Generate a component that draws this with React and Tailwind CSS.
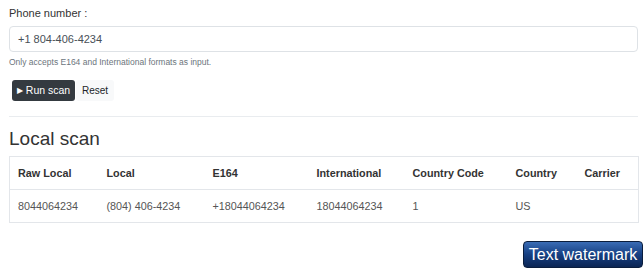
export default function App() {
  const headers = [
    ["Raw Local", "w-[89px]"],
    ["Local", "w-[106px]"],
    ["E164", "w-[104px]"],
    ["International", "w-[96px]"],
    ["Country Code", "w-[103px]"],
    ["Country", "w-[69px]"],
    ["Carrier", ""],
  ];
  const row = ["8044064234", "(804) 406-4234", "+18044064234", "18044064234", "1", "US", ""];
  return (
    <div className="w-[644px] h-[269px] bg-white relative overflow-hidden text-[#212529]" style={{ fontFamily: '"Liberation Sans", Arial, sans-serif' }}>
      <div className="pl-[9px] pr-[6px] pt-[5px]">
        <div className="text-[11px] leading-[16px] h-[21px] text-[#333]">Phone number :</div>
        <div className="h-[26px] border border-[#dee2e6] rounded-[4px] flex items-center pl-[8px] text-[11px] text-[#495057]">+1 804-406-4234</div>
        <div className="mt-[5px] text-[8.5px] leading-[10px] text-[#6c757d]">Only accepts E164 and International formats as input.</div>
        <div className="mt-[13px] flex pl-[3px]">
          <button className="h-[21px] w-[63px] bg-[#343a40] text-white rounded-[3px] text-[10.5px] flex items-center justify-center gap-[3px]">
            <span className="text-[8px]">▶</span>
            <span>Run scan</span>
          </button>
          <button className="ml-[1px] h-[21px] w-[38px] bg-[#f8f9fa] text-[#212529] rounded-[3px] text-[10px] flex items-center justify-center">Reset</button>
        </div>
        <div className="mt-[15px] border-t border-[#e9ecef]"></div>
        <div className="mt-[8px] text-[19px] leading-[28px] text-[#333]">Local scan</div>
        <table className="mt-[3px] w-[630px] border border-[#e3e6ea] border-collapse text-[10.8px]">
          <thead>
            <tr className="h-[33px] border-b border-[#e3e6ea]">
              {headers.map(([h, w]) => (
                <th key={h} className={`text-left font-bold pl-[8px] text-[#333] ${w}`}>{h}</th>
              ))}
            </tr>
          </thead>
          <tbody>
            <tr className="h-[33px] text-[#555]">
              {row.map((c, i) => (
                <td key={i} className="pl-[8px]">{c}</td>
              ))}
            </tr>
          </tbody>
        </table>
      </div>
      <div className="absolute left-[523px] top-[241px] w-[120px] h-[27px] rounded-[4px] border border-[#0a1d3d] bg-gradient-to-b from-[#3a6cb5] via-[#163f82] to-[#0b2554] text-white text-[16px] flex items-center justify-center">Text watermark</div>
    </div>
  );
}
